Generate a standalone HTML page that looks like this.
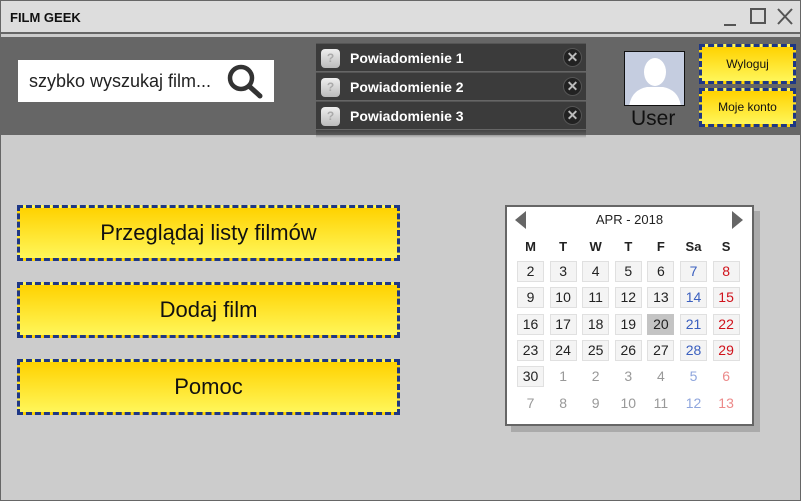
<!DOCTYPE html>
<html><head><style>
*{box-sizing:border-box;margin:0;padding:0}
body{width:801px;height:501px;background:#ccc;font-family:"Liberation Sans",sans-serif;position:relative;overflow:hidden}
.abs{position:absolute}
.frame{left:0;top:0;width:801px;height:501px;border:1px solid #666;z-index:5;pointer-events:none}
.title{left:0;top:0;width:801px;height:34px;background:#ddd;border-bottom:2px solid #666}
.title b{position:absolute;left:10px;top:10px;font-size:13px;color:#111}
.strip{left:0;top:34px;width:801px;height:3px;background:#ccc}
.head{left:0;top:37px;width:801px;height:98px;background:#666}
.search{left:18px;top:60px;width:256px;height:42px;background:#fff;font-size:18px;color:#222;padding:11px 0 0 11px}
.notif{left:316px;width:270px;height:28px;background:#3b3b3b;border-top:1px solid #555;color:#fff;font-weight:bold;font-size:14px}
.notif .q{position:absolute;left:5px;top:5px;width:19px;height:19px;border-radius:4px;background:linear-gradient(#eee,#bbb);color:#aaa;font-size:12px;text-align:center;line-height:19px}
.notif .t{position:absolute;left:34px;top:6px}
.notif .x{position:absolute;left:247px;top:4px;width:19px;height:19px;border-radius:50%;background:#222;border:1px solid #555;color:#bbb;font-size:14px;text-align:center;line-height:17px}
.ybtn{background:linear-gradient(#ffd200,#fff65a);border:3px dashed #1e3785;color:#111;text-align:center}
.cal{left:505px;top:205px;width:249px;height:221px;background:#fff;border:2px solid #666;box-shadow:6px 6px 0 #aaa}
.c{position:absolute;width:27px;height:21px;text-align:center;font-size:14px;line-height:21px;color:#222}
.bx{background:#f4f4f4;border:1px solid #e0e0e0;line-height:19px}
</style></head><body>
<div class="abs frame"></div>
<div class="abs title"><b>FILM GEEK</b>
<svg class="abs" style="left:720px;top:6px" width="75" height="22" viewBox="0 0 75 22"><path d="M4 19h12" stroke="#555" stroke-width="2"/><rect x="31" y="3" width="14" height="14" fill="none" stroke="#555" stroke-width="2"/><path d="M58 3l14 15M72 3L58 18" stroke="#555" stroke-width="2"/></svg></div>
<div class="abs strip"></div>
<div class="abs head"></div>
<div class="abs search">szybko wyszukaj film...
<svg class="abs" style="left:208px;top:3px" width="40" height="36" viewBox="0 0 40 36"><circle cx="15" cy="15" r="11" fill="none" stroke="#333" stroke-width="4.5"/><path d="M23 23l11 10" stroke="#333" stroke-width="5" stroke-linecap="round"/></svg></div>
<div class="abs" style="left:316px;top:130px;width:270px;height:8px;background:linear-gradient(#444,rgba(80,80,80,0))"></div>
<div class="abs notif" style="top:43px"><div class="q">?</div><div class="t">Powiadomienie 1</div><div class="x">✕</div></div>
<div class="abs notif" style="top:72px"><div class="q">?</div><div class="t">Powiadomienie 2</div><div class="x">✕</div></div>
<div class="abs notif" style="top:101px"><div class="q">?</div><div class="t">Powiadomienie 3</div><div class="x">✕</div></div>
<div class="abs" style="left:624px;top:51px;width:61px;height:55px;background:#c5cde0;border:1px solid #111;overflow:hidden">
<svg width="61" height="55" viewBox="0 0 61 55"><ellipse cx="30" cy="20" rx="11" ry="14" fill="#fff"/><path d="M4 55 Q6 38 22 35 L38 35 Q54 38 56 55Z" fill="#fff"/></svg></div>
<div class="abs" style="left:631px;top:107px;font-size:21px;color:#111">User</div>
<div class="abs ybtn" style="left:699px;top:44px;width:97px;height:40px;font-size:12px;line-height:34px">Wyloguj</div>
<div class="abs ybtn" style="left:699px;top:88px;width:97px;height:39px;font-size:12px;line-height:33px">Moje konto</div>
<div class="abs ybtn" style="left:17px;top:205px;width:383px;height:56px;font-size:22px;line-height:50px">Przeglądaj listy filmów</div>
<div class="abs ybtn" style="left:17px;top:282px;width:383px;height:56px;font-size:22px;line-height:50px">Dodaj film</div>
<div class="abs ybtn" style="left:17px;top:359px;width:383px;height:56px;font-size:22px;line-height:50px">Pomoc</div>
<div class="abs cal">
<svg class="abs" style="left:8px;top:4px" width="12" height="18"><path d="M11 0v18L0 9z" fill="#666"/></svg>
<svg class="abs" style="left:225px;top:4px" width="12" height="18"><path d="M0 0v18L11 9z" fill="#666"/></svg>
<div class="abs" style="left:0;top:5px;width:245px;text-align:center;font-size:13px;color:#222">APR - 2018</div>
<div id="g"></div>
</div>
<script>
var g=document.getElementById('g'),h='',hd=['M','T','W','T','F','Sa','S'];
for(var i=0;i<7;i++)h+='<div class="c" style="left:'+(10+i*32.6)+'px;top:29px;font-weight:bold;font-size:13px">'+hd[i]+'</div>';
var d=[[2,3,4,5,6,7,8],[9,10,11,12,13,14,15],[16,17,18,19,20,21,22],[23,24,25,26,27,28,29],[30,1,2,3,4,5,6],[7,8,9,10,11,12,13]];
for(var r=0;r<6;r++)for(var c=0;c<7;c++){var cur=r<4||(r==4&&c==0);var col=c==5?(cur?'#3a5fbf':'#8fa6dd'):c==6?(cur?'#d0121b':'#ec8a8a'):(cur?'#222':'#999');
var bg=(r==2&&c==4)?'background:#c4c4c4;border-color:#c4c4c4;':'';
h+='<div class="c'+(cur?' bx':'')+'" style="left:'+(10+c*32.6)+'px;top:'+(54+r*26.3)+'px;color:'+col+';'+bg+'">'+d[r][c]+'</div>';}
g.innerHTML=h;
</script>
</body></html>
